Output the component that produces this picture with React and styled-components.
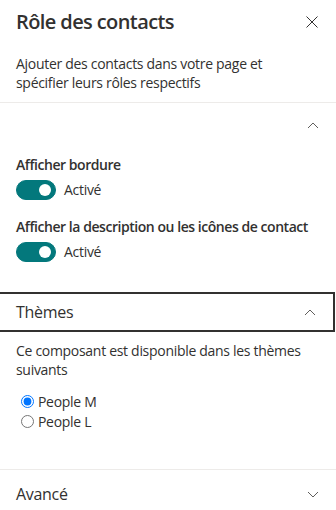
import React, { useState } from "react";
import styled, { createGlobalStyle } from "styled-components";

const GlobalStyle = createGlobalStyle`
  body {
    margin: 0;
    background: #fff;
    color: #323130;
    font-family: "Open Sans", "Noto Sans", sans-serif;
    letter-spacing: -0.3px;
  }
  button, input {
    font-family: inherit;
  }
`;

function CloseIcon() {
  return (
    <svg width="12" height="12" viewBox="0 0 12 12">
      <path d="M0.5 0.5 L11.5 11.5 M11.5 0.5 L0.5 11.5" stroke="#323130" strokeWidth="1" fill="none" />
    </svg>
  );
}

function Chevron({ up }) {
  return (
    <svg width="12" height="7" viewBox="0 0 12 7">
      <path
        d={up ? "M1 6 L6 1 L11 6" : "M1 1 L6 6 L11 1"}
        stroke="#605e5c"
        strokeWidth="1"
        fill="none"
      />
    </svg>
  );
}

function Toggle({ checked, onClick }) {
  return (
    <ToggleRow>
      <Track $on={checked} onClick={onClick}>
        <Thumb $on={checked} />
      </Track>
      <ToggleText>{checked ? "Activé" : "Désactivé"}</ToggleText>
    </ToggleRow>
  );
}

export default function App() {
  const [border, setBorder] = useState(true);
  const [desc, setDesc] = useState(true);
  const [theme, setTheme] = useState("M");

  return (
    <Panel>
      <GlobalStyle />
      <Header>
        <Title>Rôle des contacts</Title>
        <CloseButton aria-label="Fermer">
          <CloseIcon />
        </CloseButton>
      </Header>
      <Intro>
        Ajouter des contacts dans votre page et spécifier leurs rôles respectifs
      </Intro>

      <Group>
        <GroupHeader>
          <span />
          <Chevron up />
        </GroupHeader>
        <Field>
          <FieldLabel>Afficher bordure</FieldLabel>
          <Toggle checked={border} onClick={() => setBorder(!border)} />
        </Field>
        <Field>
          <FieldLabel>Afficher la description ou les icônes de contact</FieldLabel>
          <Toggle checked={desc} onClick={() => setDesc(!desc)} />
        </Field>
      </Group>

      <FocusedHeader>
        <span>Thèmes</span>
        <Chevron up />
      </FocusedHeader>
      <ThemeBody>
        <ThemeText>Ce composant est disponible dans les thèmes suivants</ThemeText>
        <RadioList>
          <RadioLabel>
            <input type="radio" name="theme" checked={theme === "M"} onChange={() => setTheme("M")} />
            People M
          </RadioLabel>
          <RadioLabel>
            <input type="radio" name="theme" checked={theme === "L"} onChange={() => setTheme("L")} />
            People L
          </RadioLabel>
        </RadioList>
      </ThemeBody>

      <GroupHeader $tall $top>
        <span>Avancé</span>
        <Chevron />
      </GroupHeader>
    </Panel>
  );
}

const Panel = styled.div`
  width: 336px;
  height: 510px;
  overflow: hidden;
  background: #fff;
`;

const Header = styled.div`
  display: flex;
  align-items: center;
  justify-content: space-between;
  padding: 8px 16px 0 16px;
  height: 28px;
`;

const Title = styled.h2`
  margin: 0;
  font-size: 20px;
  font-weight: 600;
  line-height: 28px;
  letter-spacing: -0.6px;
  color: #323130;
`;

const CloseButton = styled.button`
  display: flex;
  align-items: center;
  justify-content: center;
  width: 32px;
  height: 32px;
  margin-right: -8px;
  padding: 0;
  border: none;
  background: transparent;
  cursor: pointer;
`;

const Intro = styled.p`
  margin: 18px 0 0;
  padding: 0 56px 10px 16px;
  font-size: 14px;
  line-height: 19px;
  border-bottom: 1px solid #edebe9;
`;

const Group = styled.div`
  padding-bottom: 30px;
`;

const GroupHeader = styled.div`
  display: flex;
  align-items: center;
  justify-content: space-between;
  height: ${(p) => (p.$tall ? "48px" : "44px")};
  padding: 0 17px 0 16px;
  font-size: 16px;
  border-top: ${(p) => (p.$top ? "1px solid #edebe9" : "none")};
`;

const Field = styled.div`
  padding: 8px 16px 0;
  & + & {
    padding-top: 17px;
  }
`;

const FieldLabel = styled.div`
  font-size: 14px;
  font-weight: 600;
  line-height: 20px;
  letter-spacing: -0.45px;
  white-space: nowrap;
  margin-bottom: 5px;
`;

const ToggleRow = styled.div`
  display: flex;
  align-items: center;
  gap: 8px;
`;

const Track = styled.div`
  position: relative;
  width: 40px;
  height: 20px;
  border-radius: 10px;
  box-sizing: border-box;
  background: ${(p) => (p.$on ? "#03787c" : "#fff")};
  border: 1px solid ${(p) => (p.$on ? "#03787c" : "#605e5c")};
  cursor: pointer;
`;

const Thumb = styled.span`
  position: absolute;
  top: 3px;
  left: ${(p) => (p.$on ? "22px" : "3px")};
  width: 12px;
  height: 12px;
  border-radius: 50%;
  background: ${(p) => (p.$on ? "#fff" : "#605e5c")};
`;

const ToggleText = styled.span`
  font-size: 14px;
  line-height: 20px;
`;

const FocusedHeader = styled(GroupHeader)`
  height: 40px;
  box-sizing: border-box;
  margin-right: 1px;
  border: 2px solid #323130;
  border-left: none;
`;

const ThemeBody = styled.div`
  padding: 9px 16px 38px;
`;

const ThemeText = styled.p`
  margin: 0 0 12px;
  font-size: 14px;
  line-height: 19px;
`;

const RadioList = styled.div`
  display: flex;
  flex-direction: column;
`;

const RadioLabel = styled.label`
  display: flex;
  align-items: center;
  height: 20px;
  font-size: 14px;
  input {
    width: 13px;
    height: 13px;
    margin: 0 4px 0 5px;
  }
`;
